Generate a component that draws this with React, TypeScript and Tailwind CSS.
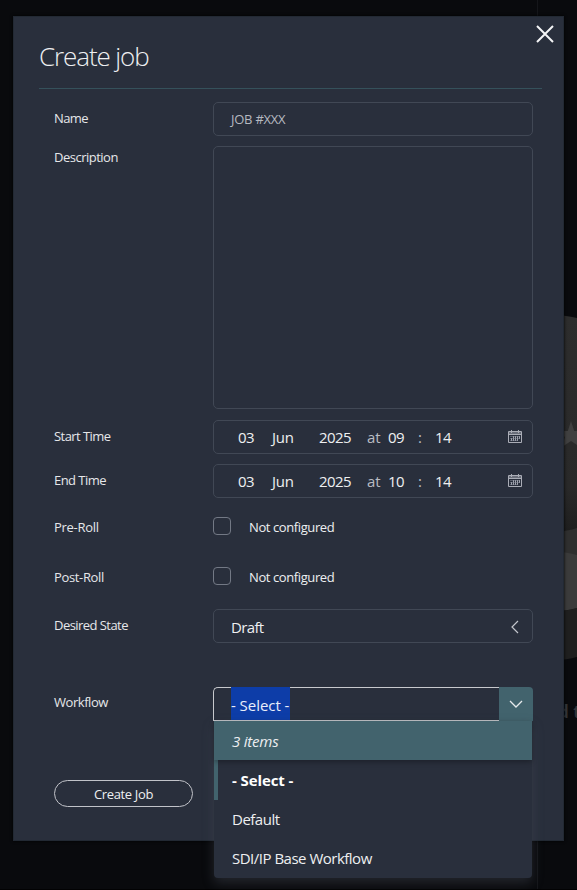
import type { ReactNode } from "react";

function Label({ children, className }: { children: ReactNode; className: string }) {
  return (
    <div className={`w-[159px] shrink-0 whitespace-nowrap text-[13px] leading-[18px] text-[#e6e7ea] ${className}`}>
      {children}
    </div>
  );
}

const box = "h-[34px] w-[320px] rounded-[5px] border border-[#414855]";

function CalendarIcon() {
  return (
    <svg width="15" height="14" viewBox="0 0 15 14" className="absolute top-[9px] left-[294px]" fill="none">
      <path d="M0.500 1.500h13v11h-13zM1 3h12M1 4.500h12M3.500 0v3M10.500 0v3" stroke="#aaadb6" />
      <path d="M5.500 6v5M7.500 6v5M9.500 6v5M11.500 6v3M3.500 8v3" stroke="#a0a4ae" />
      <path d="M2 6.500h10M2 8.500h10M2 10.500h8" stroke="#8b909b" strokeOpacity=".5" />
    </svg>
  );
}

function DateField({ hour }: { hour: string }) {
  return (
    <div className={`${box} relative flex items-center pt-px pl-[24px] text-[15px] text-[#eeeff1]`}>
      <span className="w-[34px] tracking-[-0.6px]">03</span>
      <span className="w-[47px] tracking-[-0.2px]">Jun</span>
      <span className="w-[48px] tracking-[-0.6px]">2025</span>
      <span className="w-[21px] text-[#b9bcc3]">at</span>
      <span className="w-[30px] tracking-[-0.6px]">{hour}</span>
      <span className="w-[17px] text-[#b9bcc3]">:</span>
      <span className="tracking-[-0.6px]">14</span>
      <CalendarIcon />
    </div>
  );
}

function CheckField() {
  return (
    <div className="flex">
      <div className="h-[18px] w-[18px] rounded-[4px] border border-[#737985]" />
      <span className="mt-px ml-[18px] text-[13px] leading-[18px] tracking-[-0.4px] text-[#eeeff1]">Not configured</span>
    </div>
  );
}

function Backdrop() {
  return (
    <svg className="absolute inset-0" width="577" height="890" viewBox="0 0 577 890">
      <defs>
        <linearGradient id="shade" x1="0" y1="0" x2="0" y2="1">
          <stop offset="0" stopColor="#2d2d2d" />
          <stop offset="0.5" stopColor="#292929" />
          <stop offset="0.65" stopColor="#1c1c1c" />
          <stop offset="1" stopColor="#1a1a1a" />
        </linearGradient>
      </defs>
      <path d="M537.5 0V890" stroke="#15161a" />
      <path d="M550 315Q565 315 577 318V660H550Z" fill="url(#shade)" />
      <path d="M550 533Q568 531 577 528V558H550Z" fill="#2f2f2f" />
      <path d="M550 551Q568 552 577 555V608Q566 611 550 612Z" fill="#3b3b3b" />
      <path d="M550 612Q566 611 577 608V657Q566 660 550 661Z" fill="#1f1f1f" />
      <path d="M550 661Q566 660 577 657V662H550Z" fill="#090a0d" />
      <path d="M571 421l3.200 10H585l-8 6 3 10-9-6-9 6 3-10-8-6h10.800Z" fill="#404040" />
      <path d="M0 889.500H577" stroke="#020203" />
    </svg>
  );
}

export default function App() {
  return (
    <div className="relative h-[890px] w-[577px] overflow-hidden bg-[#090a0d] font-['Open_Sans','Noto_Sans',sans-serif] font-[450]">
      <Backdrop />
      <span className="absolute top-[700px] left-[558px] text-[17px] leading-[23px] font-bold whitespace-nowrap text-[#333539]">d t</span>
      <div className="relative flex pt-[16px] pl-[13px]">
        <main className="relative h-[825px] w-[551px] border border-[#222933] bg-[#292f3c] pl-[25px] shadow-[0_0_3px_#000]">
          <svg className="absolute top-[8px] left-[522px]" width="18" height="18" viewBox="0 0 18 18">
            <path d="M1 1L17 17M17 1L1 17" stroke="#f4f5f6" strokeWidth="2" />
          </svg>
          <header className="h-[72px] w-[503px] border-b border-[#35515b] pt-[20px]">
            <h1 className="text-[26px] leading-[38px] font-[330] tracking-[-1.100px] text-[#eeeff1]">Create job</h1>
          </header>
          <form className="pt-[13px] pl-[15px]">
            <div className="flex">
              <Label className="pt-[7px] tracking-[-0.600px]">Name</Label>
              <div className={`${box} pl-[17px] text-[13px] leading-[32px] tracking-[-0.250px] text-[#b6b9c0]`}>JOB #XXX</div>
            </div>
            <div className="mt-[10px] flex">
              <Label className="pt-[2px] tracking-[-0.500px]">Description</Label>
              <div className="h-[263px] w-[320px] rounded-[5px] border border-[#414855]" />
            </div>
            <div className="mt-[11px] flex">
              <Label className="pt-[7px] tracking-[-0.550px]">Start Time</Label>
              <DateField hour="09" />
            </div>
            <div className="mt-[10px] flex">
              <Label className="pt-[7px] tracking-[-0.550px]">End Time</Label>
              <DateField hour="10" />
            </div>
            <div className="mt-[19px] flex h-[18px]">
              <Label className="pt-px tracking-[-0.300px]">Pre-Roll</Label>
              <CheckField />
            </div>
            <div className="mt-[32px] flex h-[18px]">
              <Label className="pt-px tracking-[-0.350px]">Post-Roll</Label>
              <CheckField />
            </div>
            <div className="mt-[24px] flex">
              <Label className="pt-[7px] tracking-[-0.550px]">Desired State</Label>
              <div className={`${box} relative pl-[17px] text-[15px] leading-[35px] tracking-[-0.650px] text-[#eeeff1]`}>
                Draft
                <svg className="absolute top-[10px] left-[296px]" width="10" height="14" viewBox="0 0 10 14" fill="none">
                  <path d="M8 1L2 7L8 13" stroke="#c3c6cc" strokeWidth="1.2" />
                </svg>
              </div>
            </div>
            <div className="mt-[44px] flex">
              <Label className="pt-[6px] tracking-[-0.450px]">Workflow</Label>
              <div className="relative flex h-[34px] w-[320px]">
                <div className="h-[34px] flex-1 rounded-tl-[5px] border border-r-0 border-[#c7c9cd] pl-[17px]">
                  <span className="-mt-px block h-[33px] w-[59px] bg-[#0d3da8] text-[15px] leading-[36px] tracking-[-0.050px] whitespace-nowrap text-[#e9eefa]">- Select -</span>
                </div>
                <div className="grid w-[34px] place-items-center rounded-tr-[4px] bg-[#42636d]">
                  <svg width="14" height="8" viewBox="0 0 14 8" fill="none">
                    <path d="M1 1L7 7L13 1" stroke="#e6eaec" strokeWidth="1.3" />
                  </svg>
                </div>
                <div className="absolute top-[34px] left-px h-[157px] w-[318px] rounded-b-[4px] bg-[#292f3c] text-[15px] text-[#eeeff1] shadow-[0_5px_12px_rgba(75,80,92,0.4)]">
                  <div className="relative h-[39px] bg-[#42636d] pl-[18px] leading-[40px] tracking-[-0.200px] italic shadow-[0_2px_5px_rgba(0,0,0,0.3)]">3 items</div>
                  <div className="h-[40px] border-l-4 border-[#42636d] pl-[14px] leading-[40px] font-bold tracking-[-0.100px] text-white">- Select -</div>
                  <div className="h-[39px] pl-[18px] leading-[39px] tracking-[-0.500px]">Default</div>
                  <div className="h-[39px] pl-[18px] leading-[39px] tracking-[-0.500px]">SDI/IP Base Workflow</div>
                </div>
              </div>
            </div>
            <button type="button" className="mt-[59px] block h-[27px] w-[139px] rounded-full border border-[#c1c3c9] text-[13px] leading-[24px] tracking-[-0.350px] text-[#eeeff1]">Create Job</button>
          </form>
        </main>
      </div>
    </div>
  );
}
